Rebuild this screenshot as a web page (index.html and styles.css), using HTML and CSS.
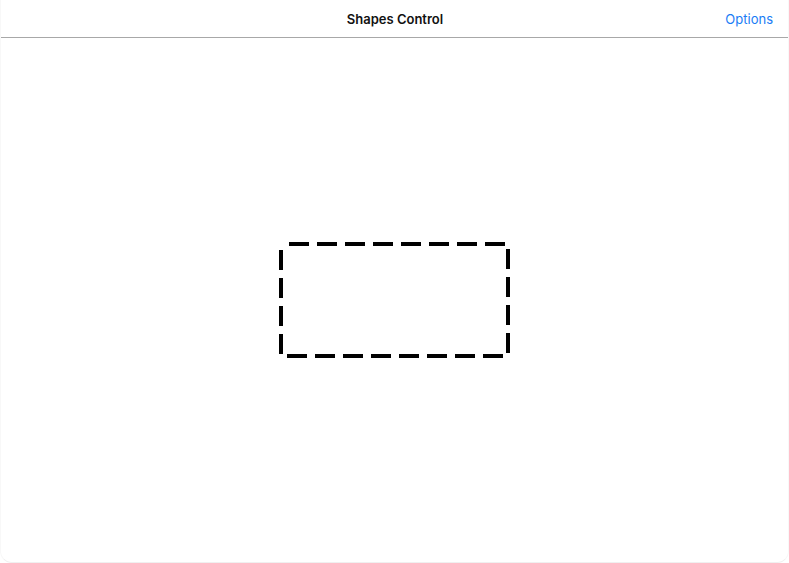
FILE: index.html
```html
<!DOCTYPE html>
<html>
<head>
<meta charset="utf-8">
<link rel="stylesheet" href="styles.css">
</head>
<body>
<div class="window">
  <header class="navbar">
    <div class="title">Shapes Control</div>
    <a class="action">Options</a>
  </header>
  <main class="canvas">
    <svg class="shape" width="231" height="116" viewBox="0 0 231 116">
      <rect x="2" y="2" width="227" height="112" fill="none" stroke="#000" stroke-width="4" stroke-dasharray="20 8" stroke-dashoffset="-8"/>
    </svg>
  </main>
</div>
</body>
</html>
```
FILE: styles.css
```css
html, body {
  margin: 0;
  padding: 0;
  background: #fff;
}
body {
  font-family: Inter, "Open Sans", "Liberation Sans", sans-serif;
}
.window {
  width: 789px;
  height: 563px;
  box-sizing: border-box;
  display: flex;
  flex-direction: column;
  border-radius: 0 0 12px 12px;
  border-left: 1px solid #f8f8f8;
  border-right: 1px solid #f8f8f8;
  border-bottom: 1px solid #f0f0f0;
  overflow: hidden;
}
.navbar {
  height: 37px;
  flex: none;
  border-bottom: 1px solid #a8a8a8;
  display: flex;
  align-items: center;
  justify-content: center;
  position: relative;
}
.title {
  font-size: 13px;
  font-weight: 600;
  color: #111;
  margin-left: 1px;
}
.action {
  position: absolute;
  right: 15px;
  top: 11px;
  font-size: 13px;
  color: #1a7cf5;
}
.canvas {
  flex: 1;
  display: flex;
  align-items: center;
  justify-content: center;
  padding-bottom: 1px;
}
.shape {
  display: block;
}
```
